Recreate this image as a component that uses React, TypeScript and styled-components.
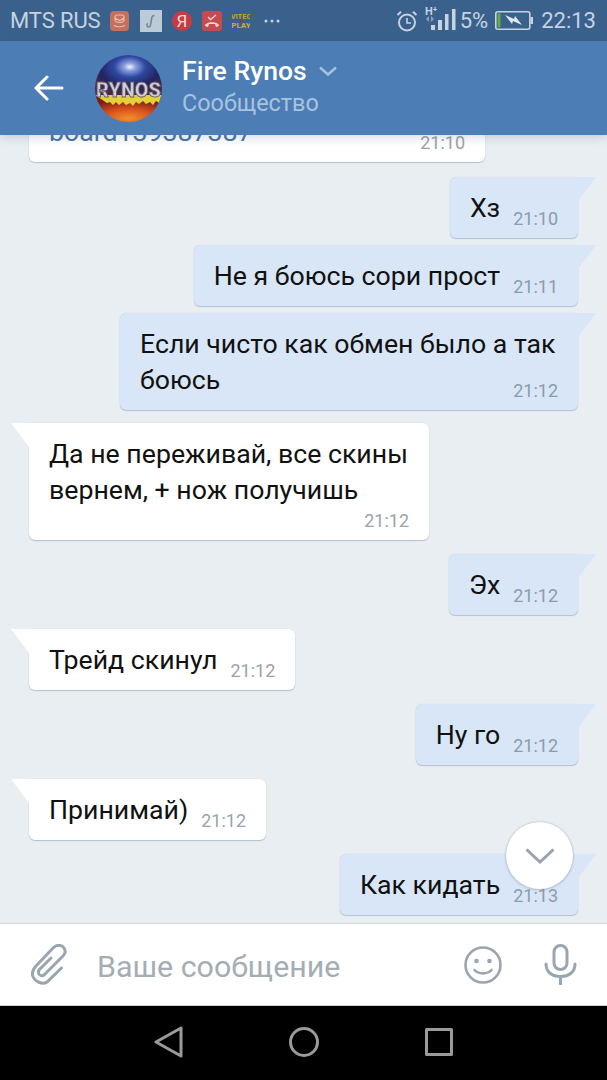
import styled, { createGlobalStyle } from 'styled-components';

const Global = createGlobalStyle`
  html, body { margin: 0; padding: 0; background: #000; }
  body { font-family: Roboto, "Liberation Sans", sans-serif; }
  * { box-sizing: border-box; }
`;

const Phone = styled.div`
  width: 607px;
  height: 1080px;
  display: flex;
  flex-direction: column;
  overflow: hidden;
`;

const StatusBar = styled.div`
  height: 41px;
  flex: none;
  background: #3a618c;
  color: #c6d3e1;
  font-size: 22px;
  display: flex;
  align-items: center;
  padding: 0 11px 0 10px;
`;

const Carrier = styled.span`
  margin-right: 9px;
  letter-spacing: -0.1px;
`;

const NotifyIcons = styled.div`
  display: flex;
  align-items: center;
  gap: 10px;
  flex: 1;
`;

const SysIcons = styled.div`
  display: flex;
  align-items: center;
`;

const StatusText = styled.span<{ $left: number }>`
  margin-left: ${(p) => p.$left}px;
`;

const Header = styled.header`
  height: 94px;
  flex: none;
  background: #4c7db4;
  display: flex;
  align-items: center;
  padding-left: 34px;
  position: relative;
  z-index: 2;
  box-shadow: 0 2px 10px rgba(60, 80, 100, 0.22);
`;

const Avatar = styled.svg`
  width: 67px;
  height: 67px;
  margin-left: 31px;
  margin-right: 20px;
  flex: none;
`;

const TitleBlock = styled.div`
  display: flex;
  flex-direction: column;
  gap: 3px;
  margin-top: -3px;
`;

const TitleRow = styled.div`
  display: flex;
  align-items: center;
  gap: 12px;
  color: #fff;
  font-size: 26.6px;
  font-weight: 500;
  line-height: 30px;
`;

const Subtitle = styled.div`
  color: #a8c3e0;
  font-size: 23.4px;
  line-height: 28px;
`;

const Chat = styled.main`
  flex: 1;
  min-height: 0;
  position: relative;
  overflow: hidden;
  background: #e9eef3;
  display: flex;
  flex-direction: column;
  justify-content: flex-end;
  padding: 0 29px 8px;
`;

const Bubble = styled.div<{ $out?: boolean; $gap: number; $width?: number }>`
  position: relative;
  display: flow-root;
  align-self: ${(p) => (p.$out ? 'flex-end' : 'flex-start')};
  width: ${(p) => (p.$width ? `${p.$width}px` : 'auto')};
  flex: none;
  margin-top: ${(p) => p.$gap}px;
  padding: 13px 18px 10px 20px;
  border-radius: 0 0 6px 6px;
  border-top-left-radius: ${(p) => (p.$out ? '6px' : '0')};
  border-top-right-radius: ${(p) => (p.$out ? '0' : '6px')};
  background: ${(p) => (p.$out ? '#d8e6f7' : '#fff')};
  box-shadow: 0 1px 1px rgba(120, 145, 170, 0.45), 0 0 1px rgba(120, 145, 170, 0.4);
  color: #111;
  font-size: 26.7px;
  line-height: 36px;

  &::after {
    content: '';
    position: absolute;
    top: 0;
    ${(p) => (p.$out ? 'right: -18px;' : 'left: -18px;')}
    width: 18px;
    height: 24px;
    background: ${(p) => (p.$out ? '#d8e6f7' : '#fff')};
    clip-path: ${(p) =>
      p.$out ? 'polygon(0 0, 100% 0, 0 100%)' : 'polygon(0 0, 100% 0, 100% 100%)'};
  }
`;

const LinkText = styled.span`
  color: #4a76a8;
`;

const Time = styled.span<{ $out?: boolean; $below?: boolean }>`
  float: right;
  clear: ${(p) => (p.$below ? 'both' : 'none')};
  margin: ${(p) => (p.$below ? '3px' : '19px')} 2px 0 13px;
  font-size: 18px;
  line-height: 19px;
  color: ${(p) => (p.$out ? '#8c9cad' : '#9ba3ab')};
`;

const ScrollButton = styled.button`
  position: absolute;
  right: 34px;
  bottom: 34px;
  width: 67px;
  height: 67px;
  border: none;
  border-radius: 50%;
  background: #fff;
  box-shadow: 0 0 2px rgba(80, 90, 100, 0.4), 0 1px 3px rgba(80, 90, 100, 0.2);
  display: flex;
  align-items: center;
  justify-content: center;
  padding: 0;
`;

const Composer = styled.footer`
  height: 83px;
  flex: none;
  background: #fff;
  border-top: 1px solid #d3d9df;
  border-bottom: 1px solid #cfd2d4;
  display: flex;
  align-items: center;
  padding: 0 30px;
`;

const Placeholder = styled.div`
  flex: 1;
  margin: 3px 0 0 30px;
  color: #a5adb4;
  font-size: 30.4px;
`;

const ComposerIcons = styled.div`
  display: flex;
  align-items: center;
  gap: 42px;
`;

const NavBar = styled.nav`
  height: 74px;
  flex: none;
  background: #000;
  display: flex;
  align-items: center;
  padding-left: 154px;
  padding-bottom: 3px;
  gap: 106px;
`;

function Notifications() {
  return (
    <NotifyIcons>
      <svg width="20" height="20" viewBox="0 0 20 20">
        <rect width="19" height="20" rx="4" fill="#c4705a" />
        <path d="M5 6c0-1 1-2 2-2h5c1 0 2 1 2 2v3c0 1.500-2 2.500-4.500 2.500S5 10.500 5 9zM5 7l4.500 2.500L14 7M4 14.500c3 1.500 8 1.500 11 0" fill="none" stroke="#e6c0b0" strokeWidth="1.200" />
      </svg>
      <svg width="22" height="22" viewBox="0 0 22 22">
        <rect width="22" height="22" fill="#bccbd8" />
        <path d="M10.500 15l1.500-8c.3-1 1.500-1.500 2.500-1M10.500 15a1.800 1.800 0 1 1-2.500-1.500" fill="none" stroke="#76858f" strokeWidth="1.500" />
      </svg>
      <svg width="20" height="20" viewBox="0 0 20 20">
        <circle cx="10" cy="10" r="10" fill="#c93b44" />
        <text x="10" y="16" fontSize="17" textAnchor="middle" fill="#f2dcdc">Я</text>
      </svg>
      <svg width="20" height="20" viewBox="0 0 20 20">
        <rect width="20" height="20" rx="3" fill="#c74a4e" />
        <path d="M3 15c0-5 14-5 14 0l-3 1-1-3H7l-1 3z" fill="#f3d6d6" />
        <path d="M6 6l2.500 2.500L14 4" fill="none" stroke="#f3d6d6" strokeWidth="1.300" />
      </svg>
      <svg width="18" height="20" viewBox="0 0 18 20">
        <text x="9" y="8" fontSize="7.500" fontWeight="700" textAnchor="middle" fill="#c9a02e">VITEC</text>
        <text x="9" y="17" fontSize="8" fontWeight="700" textAnchor="middle" fill="#d2ad36">PLAY</text>
        <circle cx="9" cy="10" r="1.500" fill="#8a3b2a" />
      </svg>
      <svg width="16" height="4" viewBox="0 0 16 4" style={{ marginLeft: 4 }}>
        <circle cx="2" cy="2" r="1.500" fill="#c6d3e1" />
        <circle cx="8" cy="2" r="1.500" fill="#c6d3e1" />
        <circle cx="14" cy="2" r="1.500" fill="#c6d3e1" />
      </svg>
    </NotifyIcons>
  );
}

function SystemIcons() {
  return (
    <SysIcons>
      <svg width="22" height="22" viewBox="0 0 22 22" fill="none" stroke="#c6d3e1">
        <circle cx="11" cy="12.500" r="8" strokeWidth="2" />
        <path d="M11 8v5h4" strokeWidth="1.600" />
        <path d="M1.500 5L5 1.800M20.500 5L17 1.800" strokeWidth="2" />
      </svg>
      <svg width="33" height="26" viewBox="0 0 33 26" style={{ marginLeft: 7, marginTop: -5 }}>
        <text x="0" y="10" fontSize="11" fontWeight="700" fill="#c6d3e1">H⁺</text>
        <path d="M4 17l-3-3 3-3zM6 11l3 3-3 3z" fill="#8ba2ba" />
        <rect x="6" y="20" width="4" height="5" fill="#c6d3e1" />
        <rect x="13" y="15" width="4" height="10" fill="#c6d3e1" />
        <rect x="20" y="9" width="3.500" height="16" fill="#c6d3e1" />
        <rect x="27" y="4" width="3.500" height="21" fill="#c6d3e1" />
      </svg>
      <StatusText $left={2}>5%</StatusText>
      <svg width="38" height="19" viewBox="0 0 38 19" style={{ marginLeft: 7 }}>
        <rect x="0.800" y="0.800" width="34" height="17.400" rx="2" fill="none" stroke="#c6d3e1" strokeWidth="1.600" />
        <rect x="2.500" y="2.500" width="3" height="14" fill="#67a845" />
        <rect x="35.500" y="6" width="2.500" height="7" fill="#c6d3e1" />
        <path d="M10 4l9 4 1-3 7 9-9-4-1 3z" fill="#dfe7ef" />
      </svg>
      <StatusText $left={8}>22:13</StatusText>
    </SysIcons>
  );
}

function Logo() {
  return (
    <Avatar viewBox="0 0 67 67">
      <defs>
        <radialGradient id="sky" cx="52%" cy="27%" r="62%">
          <stop offset="0" stopColor="#f4f7ff" />
          <stop offset="0.14" stopColor="#8aa0e0" />
          <stop offset="0.38" stopColor="#2f48a0" />
          <stop offset="0.72" stopColor="#232460" />
          <stop offset="1" stopColor="#46284f" />
        </radialGradient>
        <radialGradient id="fire" cx="50%" cy="85%" r="75%">
          <stop offset="0" stopColor="#f2902c" />
          <stop offset="0.5" stopColor="#d8501c" />
          <stop offset="1" stopColor="#7c1d18" />
        </radialGradient>
        <filter id="soft">
          <feGaussianBlur stdDeviation="0.400" />
        </filter>
        <clipPath id="disc">
          <circle cx="33.500" cy="33.500" r="33.500" />
        </clipPath>
      </defs>
      <g clipPath="url(#disc)">
        <rect width="67" height="44" fill="url(#sky)" />
        <rect y="42" width="67" height="25" fill="url(#fire)" />
        <path d="M0 40h67v5l-3 3-3-2-3 4-3-3-4 2-3-3-4 3-3-2-3 4-3-3-4 2-3-3-4 3-3-3-3 3-3-3-3 1z" fill="#e4cf3e" filter="url(#soft)" />
        <text x="33.500" y="42" fontSize="20" fontWeight="900" textAnchor="middle" textLength="65" lengthAdjust="spacingAndGlyphs" fill="#cfcdd4" stroke="#5f5c68" strokeWidth="0.800" filter="url(#soft)">RYNOS</text>
      </g>
    </Avatar>
  );
}

export default function App() {
  return (
    <Phone>
      <Global />
      <StatusBar>
        <Carrier>MTS RUS</Carrier>
        <Notifications />
        <SystemIcons />
      </StatusBar>

      <Header>
        <svg width="30" height="26" viewBox="0 0 30 26" fill="none" stroke="#fff" strokeWidth="3" strokeLinecap="round" strokeLinejoin="round">
          <path d="M2 13h26M13 2L2 13l11 11" />
        </svg>
        <Logo />
        <TitleBlock>
          <TitleRow>
            Fire Rynos
            <svg width="18" height="10" viewBox="0 0 18 10" fill="none" stroke="#a8c3e0" strokeWidth="2.500">
              <path d="M1 1.500l8 7 8-7" />
            </svg>
          </TitleRow>
          <Subtitle>Сообщество</Subtitle>
        </TitleBlock>
      </Header>

      <Chat>
        <Bubble $gap={0} $width={456}>
          <LinkText>board139387387</LinkText>
          <Time>21:10</Time>
        </Bubble>
        <Bubble $out $gap={15}>
          Хз<Time $out>21:10</Time>
        </Bubble>
        <Bubble $out $gap={7}>
          Не я боюсь сори прост<Time $out>21:11</Time>
        </Bubble>
        <Bubble $out $gap={7} $width={458}>
          Если чисто как обмен было а так боюсь<Time $out>21:12</Time>
        </Bubble>
        <Bubble $gap={13} $width={400}>
          Да не переживай, все скины вернем, + нож получишь<Time $below>21:12</Time>
        </Bubble>
        <Bubble $out $gap={14}>
          Эх<Time $out>21:12</Time>
        </Bubble>
        <Bubble $gap={14}>
          Трейд скинул<Time>21:12</Time>
        </Bubble>
        <Bubble $out $gap={14}>
          Ну го<Time $out>21:12</Time>
        </Bubble>
        <Bubble $gap={14}>
          Принимай)<Time>21:12</Time>
        </Bubble>
        <Bubble $out $gap={14}>
          Как кидать<Time $out>21:13</Time>
        </Bubble>
        <ScrollButton aria-label="Вниз">
          <svg width="30" height="16" viewBox="0 0 30 16" fill="none" stroke="#99a3ad" strokeWidth="3">
            <path d="M1.500 1.500L15 14 28.500 1.500" />
          </svg>
        </ScrollButton>
      </Chat>

      <Composer>
        <svg width="37" height="41" viewBox="0 0 37 41" fill="none" stroke="#99a5b0" strokeWidth="3" strokeLinecap="round">
          <path d="M31.500 24L17 38c-4 3-13 0-14.500-7-.5-4 1.500-7 3.500-9L23 4c4-4 9-3 11 0s1 6-1 8L14 31c-3 2-7-1-5-5l12-12" />
        </svg>
        <Placeholder>Ваше сообщение</Placeholder>
        <ComposerIcons>
          <svg width="38" height="38" viewBox="0 0 38 38" fill="none" stroke="#99a5b0" strokeWidth="2.600" strokeLinecap="round">
            <circle cx="19" cy="19" r="17.500" />
            <circle cx="12.500" cy="15" r="2.300" fill="#99a5b0" stroke="none" />
            <circle cx="25.500" cy="15" r="2.300" fill="#99a5b0" stroke="none" />
            <path d="M10.500 24c4 4.500 13 4.500 17 0" />
          </svg>
          <svg width="33" height="41" viewBox="0 0 33 41" fill="none" stroke="#99a5b0" strokeWidth="3" strokeLinecap="round">
            <rect x="10" y="1.500" width="13" height="24" rx="6.500" />
            <path d="M2 20c0 8 6 12.500 14.500 12.500S31 28 31 20M16.500 33v7" />
          </svg>
        </ComposerIcons>
      </Composer>

      <NavBar>
        <svg width="29" height="32" viewBox="0 0 29 32" fill="none" stroke="#9a9a9a" strokeWidth="3" strokeLinejoin="round">
          <path d="M27 2v28L2 16z" />
        </svg>
        <svg width="30" height="30" viewBox="0 0 30 30" fill="none" stroke="#9a9a9a" strokeWidth="3">
          <circle cx="15" cy="15" r="13.500" />
        </svg>
        <svg width="28" height="28" viewBox="0 0 28 28" fill="none" stroke="#9a9a9a" strokeWidth="3" strokeLinejoin="round">
          <rect x="1.500" y="1.500" width="25" height="25" />
        </svg>
      </NavBar>
    </Phone>
  );
}
